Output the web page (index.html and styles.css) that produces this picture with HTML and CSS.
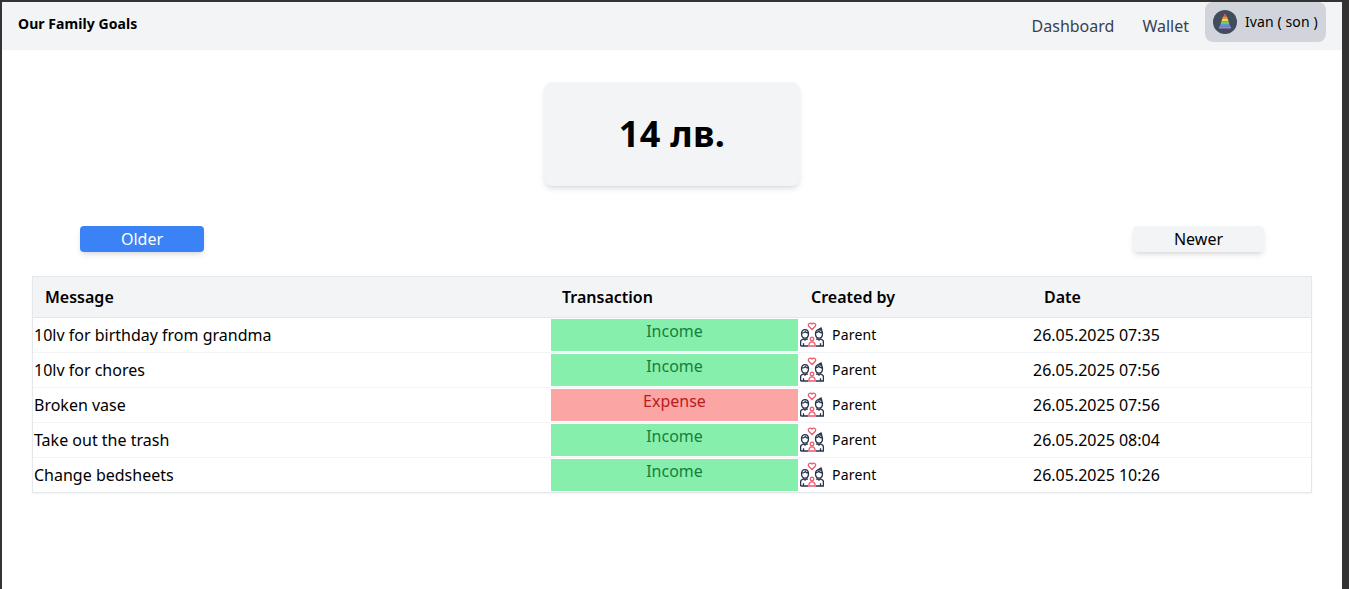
FILE: index.html
```html
<!DOCTYPE html>
<html lang="en">
   <head>
      <meta charset="UTF-8">
      <meta name="viewport" content="width=device-width, initial-scale=1.0">
      <link rel="stylesheet" href="styles.css">
      <title>Our Family Goals</title>
   </head>
   <body>
      <svg class="defs" width="0" height="0">
         <symbol id="parents" viewBox="0 0 24 25">
            <g fill="none" stroke-width="1.300">
               <path d="M12 7.500 8.900 4.500C7.600 3.200 8.600 1.100 10.400 1.100c.7 0 1.200.3 1.600.9.400-.6.900-.9 1.600-.9 1.800 0 2.800 2.100 1.500 3.400Z" stroke="#ee5a6c"/>
               <path d="M1.500 11.800C1.500 9.100 3 7.600 5 7.600s3.500 1.500 3.500 4.200S7 16.100 5 16.100s-3.500-1.600-3.500-4.300ZM1.700 11.100c1.600 0 2.800-.5 3.600-1.500.5.800 1.500 1.300 3 1.500" stroke="#26334d"/>
               <path d="M15.500 11.800c0-2.700 1.500-4.200 3.500-4.200s3.500 1.500 3.500 4.200-1.500 4.300-3.500 4.300-3.500-1.600-3.500-4.300ZM15.700 10.900c1.300-.2 2.500-.8 3.100-1.700.6 1 1.700 1.600 3.500 1.800M18 7.700l3-1.800.9 2.600" stroke="#26334d"/>
               <path d="M.6 24v-4.300c0-1.300.8-2 2-2.400l1-.5L5 18.200l1.500-1.400 1.300.6M.6 24h7.700M3.500 21.200V24M16.200 17.400l1.300-.6 1.500 1.400 1.400-1.400 1 .5c1.200.4 2 1.100 2 2.400V24h-7.700M20.500 21.200V24" stroke="#26334d"/>
               <path d="M8.800 24c0-2.800 1.200-4.200 3.200-4.200s3.200 1.400 3.200 4.200ZM10.200 17a1.800 1.800 0 1 1 3.600 0 1.800 1.800 0 0 1-3.600 0Z" stroke="#ee5a6c"/>
            </g>
         </symbol>
      </svg>
      <div class="page">
         <header class="navbar">
            <span class="brand">Our Family Goals</span>
            <nav class="nav-links">
               <a href="#">Dashboard</a>
               <a href="#">Wallet</a>
               <button class="user-btn">
                  <svg class="avatar" viewBox="0 0 24 24">
                     <circle cx="12" cy="12" r="12" fill="#414c5c"/>
                     <path d="M11.300 4h1.400l.7 2.500h-2.800Z" fill="#e8553f"/>
                     <path d="M10 6.500h4l.8 2.500H9.200Z" fill="#f2913d"/>
                     <path d="M9.200 9h5.600l.8 2.500H8.400Z" fill="#f9d648"/>
                     <path d="M8.400 11.500h7.200l.8 2.500H7.600Z" fill="#7cc75b"/>
                     <path d="M7.600 14h8.800l.8 2.500H6.800Z" fill="#4f9fe0"/>
                     <path d="M6 16.500h12v2H6Z" fill="#a77fd1"/>
                  </svg>
                  <span class="user-name">Ivan ( son )</span>
               </button>
            </nav>
         </header>

         <main>
            <div class="balance">14 лв.</div>

            <div class="pager">
               <button class="pager-btn older">Older</button>
               <button class="pager-btn newer">Newer</button>
            </div>

            <div class="table-wrap">
               <table class="transactions">
                  <colgroup>
                     <col class="col-message">
                     <col class="col-type">
                     <col class="col-author">
                     <col>
                  </colgroup>
                  <thead>
                     <tr>
                        <th>Message</th>
                        <th>Transaction</th>
                        <th>Created by</th>
                        <th>Date</th>
                     </tr>
                  </thead>
                  <tbody>
                     <tr>
                        <td>10lv for birthday from grandma</td>
                        <td class="type-cell"><div class="type income">Income</div></td>
                        <td><div class="author"><svg class="author-icon"><use href="#parents"/></svg>Parent</div></td>
                        <td>26.05.2025 07:35</td>
                     </tr>
                     <tr>
                        <td>10lv for chores</td>
                        <td class="type-cell"><div class="type income">Income</div></td>
                        <td><div class="author"><svg class="author-icon"><use href="#parents"/></svg>Parent</div></td>
                        <td>26.05.2025 07:56</td>
                     </tr>
                     <tr>
                        <td>Broken vase</td>
                        <td class="type-cell"><div class="type expense">Expense</div></td>
                        <td><div class="author"><svg class="author-icon"><use href="#parents"/></svg>Parent</div></td>
                        <td>26.05.2025 07:56</td>
                     </tr>
                     <tr>
                        <td>Take out the trash</td>
                        <td class="type-cell"><div class="type income">Income</div></td>
                        <td><div class="author"><svg class="author-icon"><use href="#parents"/></svg>Parent</div></td>
                        <td>26.05.2025 08:04</td>
                     </tr>
                     <tr>
                        <td>Change bedsheets</td>
                        <td class="type-cell"><div class="type income">Income</div></td>
                        <td><div class="author"><svg class="author-icon"><use href="#parents"/></svg>Parent</div></td>
                        <td>26.05.2025 10:26</td>
                     </tr>
                  </tbody>
               </table>
            </div>
         </main>
      </div>
   </body>
</html>
```

FILE: styles.css
```css
* {
box-sizing: border-box;
}
html, body {
height: 100%;
}
body {
margin: 0;
padding: 2px 7px 0 2px;
background-color: #333;
font-family: "Noto Sans", sans-serif;
font-size: 16px;
line-height: 24px;
color: #000;
overflow: hidden;
}
.defs {
position: absolute;
}
.page {
height: 100%;
background-color: #fff;
}
.navbar {
display: flex;
justify-content: space-between;
height: 48px;
padding-left: 16px;
padding-right: 16px;
background-color: #f3f4f6;
}
.brand {
font-size: 14px;
font-weight: 700;
line-height: 20px;
letter-spacing: .06px;
margin-top: 12px;
}
.nav-links {
display: flex;
align-items: flex-start;
}
.nav-links a {
margin-top: 12px;
margin-right: 28px;
color: #374151;
text-decoration: none;
}
.nav-links a:nth-child(2) {
margin-right: 16px;
}
.user-btn {
display: flex;
align-items: center;
gap: 8px;
width: 121px;
height: 40px;
padding: 0 8px;
border: none;
border-radius: 8px;
background-color: #d1d5db;
font-family: inherit;
font-size: 14px;
color: #000;
white-space: nowrap;
cursor: pointer;
}
.user-name {
margin-bottom: 2px;
letter-spacing: .1px;
}
.avatar {
width: 24px;
height: 24px;
flex: none;
}
.balance {
width: 256px;
height: 104px;
margin: 32px auto 40px;
border-radius: 8px;
background-color: #f3f4f6;
box-shadow: 0 4px 6px -1px rgba(0, 0, 0, .1), 0 2px 4px -2px rgba(0, 0, 0, .1);
font-size: 36px;
font-weight: 700;
line-height: 104px;
letter-spacing: .33px;
text-align: center;
}
.pager {
display: flex;
justify-content: space-between;
padding: 0 78px;
}
.pager-btn {
height: 26px;
padding: 0;
border: none;
border-radius: 4px;
box-shadow: 0 4px 6px -1px rgba(0, 0, 0, .1), 0 2px 4px -2px rgba(0, 0, 0, .1);
font-family: inherit;
font-size: 16px;
line-height: 26px;
cursor: pointer;
}
.older {
width: 124px;
background-color: #3b82f6;
color: #fff;
}
.newer {
width: 131px;
background-color: #f3f4f6;
color: #000;
}
.table-wrap {
margin: 24px 30px 0;
border: 1px solid #e5e7eb;
box-shadow: 0 1px 2px rgba(0, 0, 0, .05);
}
.transactions {
width: 100%;
table-layout: fixed;
border-collapse: collapse;
}
.col-message {
width: 517px;
}
.col-type {
width: 249px;
}
.col-author {
width: 233px;
}
.transactions th {
height: 40px;
padding: 0 12px;
background-color: #f3f4f6;
border-bottom: 1px solid #e5e7eb;
font-weight: 600;
text-align: left;
}
.transactions td {
height: 35px;
padding: 0 1px;
border-bottom: 1px solid #f3f4f6;
}
.transactions tr:last-child td {
border-bottom: none;
height: 34px;
}
.transactions .type-cell {
padding: 1px;
vertical-align: top;
}
.type {
height: 32px;
text-align: center;
}
.income {
background-color: #86efac;
color: #15803d;
}
.expense {
background-color: #fca5a5;
color: #b91c1c;
}
.author {
display: flex;
align-items: center;
gap: 8px;
font-size: 14px;
letter-spacing: .2px;
}
.author-icon {
width: 24px;
height: 25px;
flex: none;
}
```
